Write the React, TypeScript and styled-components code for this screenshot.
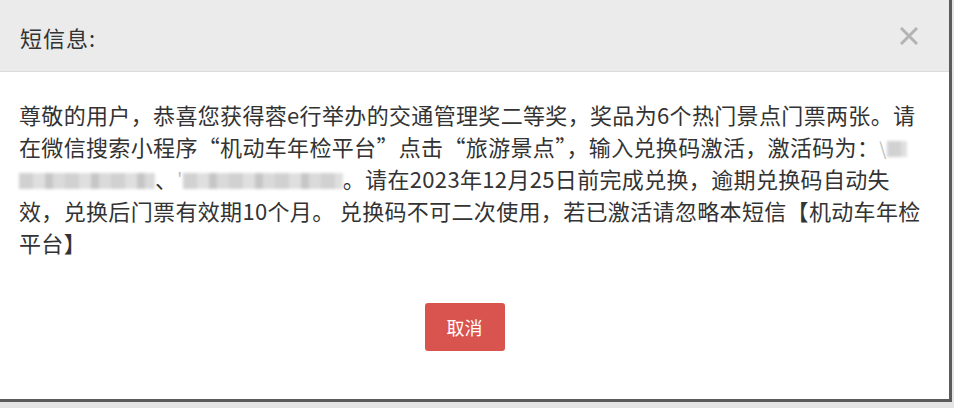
import { FC } from 'react'
import styled, { createGlobalStyle } from 'styled-components'

const GlobalStyle = createGlobalStyle`
  html, body {
    margin: 0;
    padding: 0;
    background: #e4e4e4;
  }
  body {
    font-family: "Noto Sans CJK SC", "Noto Sans", sans-serif;
  }
`

const Dialog = styled.div`
  width: 949px;
  height: 399px;
  background: #fff;
  border-right: 3px solid #5b5b5b;
  border-bottom: 3px solid #5b5b5b;
  display: flex;
  flex-direction: column;
`

const Header = styled.div`
  height: 71px;
  background: #ebebeb;
  border-bottom: 1px solid #dcdcdc;
  display: flex;
  align-items: center;
  justify-content: space-between;
  padding: 0 31px 0 20px;
  flex-shrink: 0;
`

const Title = styled.div`
  font-size: 22px;
  letter-spacing: 1px;
  color: #333;
  line-height: 1;
  margin-top: 2px;
`

const CloseButton = styled.button`
  border: none;
  background: none;
  padding: 0;
  width: 18px;
  height: 18px;
  cursor: pointer;
  display: flex;
  margin-top: 1px;
`

const Body = styled.div`
  padding: 26px 10px 0 19px;
  color: #333;
  font-size: 22px;
  letter-spacing: 0.34px;
  line-height: 32px;
`

const Line = styled.div`
  white-space: nowrap;
  height: 32px;
`

const Peek = styled.span`
  color: #bbb;
  font-size: 18px;
  line-height: 1;
`

const Blur = styled.span<{ w: number }>`
  display: inline-block;
  width: ${p => p.w}px;
  height: 16px;
  vertical-align: -1px;
  background:
    repeating-linear-gradient(90deg, #c9c9c9 0 14px, #dadada 14px 26px, #bdbdbd 26px 34px, #d4d4d4 34px 46px);
  filter: blur(1.6px);
  opacity: 0.85;
`

const Footer = styled.div`
  display: flex;
  justify-content: center;
  padding: 45px 20px 0 0;
`

const CancelButton = styled.button`
  width: 80px;
  height: 48px;
  border: none;
  border-radius: 3px;
  background: #d9534f;
  color: #fff;
  font-family: "Noto Sans CJK SC", sans-serif;
  font-size: 18px;
  cursor: pointer;
`

const CloseIcon: FC = () => (
  <svg width='18' height='18' viewBox='0 0 18 18'>
    <path d='M2 2 L16 16 M16 2 L2 16' stroke='#b3b3b3' strokeWidth='3' strokeLinecap='square' />
  </svg>
)

export default function App() {
  return (
    <>
      <GlobalStyle />
      <Dialog>
        <Header>
          <Title>短信息:</Title>
          <CloseButton aria-label='关闭'>
            <CloseIcon />
          </CloseButton>
        </Header>
        <Body lang='zh-CN'>
          <Line>尊敬的用户，恭喜您获得蓉e行举办的交通管理奖二等奖，奖品为6个热门景点门票两张。请</Line>
          <Line>
            在微信搜索小程序“机动车年检平台”点击“旅游景点”，输入兑换码激活，激活码为：<Peek>\</Peek>
            <Blur w={20} />
          </Line>
          <Line>
            <Blur w={136} />、<Peek>'</Peek>
            <Blur w={160} />。请在2023年12月25日前完成兑换，逾期兑换码自动失
          </Line>
          <Line>效，兑换后门票有效期10个月。 兑换码不可二次使用，若已激活请忽略本短信【机动车年检</Line>
          <Line>平台】</Line>
        </Body>
        <Footer>
          <CancelButton>取消</CancelButton>
        </Footer>
      </Dialog>
    </>
  )
}
